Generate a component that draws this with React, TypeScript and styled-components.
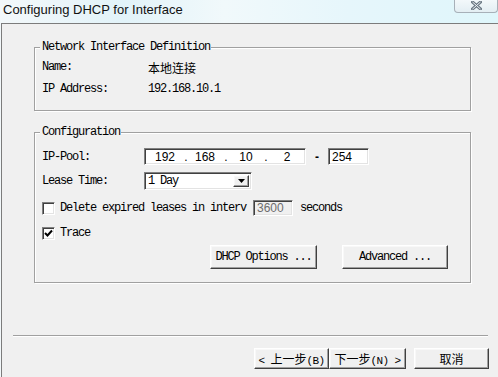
import React from "react";
import styled, { createGlobalStyle, css } from "styled-components";

const GlobalStyle = createGlobalStyle`
  html, body {
    margin: 0;
    padding: 0;
    background: #e9f3f7;
  }
`;

const dosFont = `"Liberation Mono", "Noto Sans CJK SC", monospace`;

const sunken = css`
  box-sizing: border-box;
  border: 1px solid;
  border-color: #808080 #ffffff #ffffff #808080;
  box-shadow: inset 1px 1px 0 #404040, inset -1px -1px 0 #e3e3e3;
`;

const raised = css`
  box-sizing: border-box;
  border: 1px solid;
  border-color: #ffffff #404040 #404040 #ffffff;
  box-shadow: inset -1px -1px 0 #a0a0a0, inset 1px 1px 0 #f8f8f8;
  background: #f0f0f0;
`;

const Window = styled.div`
  width: 498px;
  height: 377px;
  display: flex;
  flex-direction: column;
  overflow: hidden;
  background: linear-gradient(90deg, #f3f8fa 0%, #e2f3f9 25%, #f1f9fb 45%, #e6f6fb 70%, #dff6fb 100%);
`;

const TitleBar = styled.div`
  height: 23px;
  flex: none;
  display: flex;
  align-items: flex-start;
  justify-content: space-between;
`;

const Title = styled.span`
  font-family: "Liberation Sans", "Noto Sans", sans-serif;
  font-size: 13px;
  line-height: 17px;
  padding: 1px 0 0 3px;
  color: #111;
`;

const CloseButton = styled.div`
  width: 44px;
  height: 14px;
  margin-top: -1px;
  box-sizing: border-box;
  border: 1px solid #a7b0b8;
  border-top: none;
  border-radius: 0 0 4px 4px;
  background: linear-gradient(#f4f9fb, #e3eef3);
  display: flex;
  align-items: center;
  justify-content: center;
`;

const Client = styled.div`
  flex: 1;
  margin-left: 1px;
  border-top: 1px solid #7c7c7c;
  border-left: 1px solid #7c7c7c;
  background: #f0f0f0;
  padding: 23px 9px 0 11px;
  display: flex;
  flex-direction: column;
  font-family: ${dosFont};
  font-size: 12px;
  letter-spacing: -1.2px;
  color: #000;
`;

const Group = styled.div<{ $pad: string; $top?: number }>`
  position: relative;
  margin: ${p => p.$top ?? 0}px 18px 0 21px;
  border: 1px solid #a0a0a0;
  box-shadow: inset 1px 1px 0 #fff, 1px 1px 0 #fff;
  padding: ${p => p.$pad};
  display: flex;
  flex-direction: column;
`;

const Legend = styled.span`
  position: absolute;
  top: -8px;
  left: 5px;
  padding: 0 1px 0 2px;
  background: #f0f0f0;
  line-height: 15px;
`;

const InfoRow = styled.div`
  height: 22px;
  display: flex;
  align-items: center;
`;

const Label = styled.span<{ $w: number }>`
  width: ${p => p.$w}px;
  flex: none;
`;

const Cjk = styled.span`
  font-family: "Noto Sans CJK SC", sans-serif;
  font-size: 12px;
  letter-spacing: 0;
`;

const FormRow = styled.div<{ $top: number; $h: number }>`
  margin-top: ${p => p.$top}px;
  height: ${p => p.$h}px;
  display: flex;
  align-items: center;
`;

const Field = styled.div<{ $w: number; $disabled?: boolean }>`
  ${sunken};
  width: ${p => p.$w}px;
  height: 100%;
  background: ${p => (p.$disabled ? "#f0f0f0" : "#fff")};
  color: ${p => (p.$disabled ? "#6d6d6d" : "#000")};
  display: flex;
  align-items: center;
  padding-left: 3px;
  font-family: "Liberation Sans", sans-serif;
  font-size: 12px;
  letter-spacing: 0;
`;

const Octet = styled.span<{ $w: number }>`
  width: ${p => p.$w}px;
  text-align: center;
`;

const Dash = styled.span`
  width: 22px;
  text-align: center;
  font-family: "Liberation Sans", sans-serif;
  font-weight: bold;
  letter-spacing: 0;
`;

const Select = styled.div`
  ${sunken};
  width: 108px;
  height: 100%;
  background: #fff;
  display: flex;
  align-items: stretch;
  padding: 2px;
`;

const SelectText = styled.span`
  flex: 1;
  display: flex;
  align-items: center;
  padding-left: 1px;
`;

const ArrowButton = styled.span`
  ${raised};
  width: 16px;
  display: flex;
  align-items: center;
  justify-content: center;
`;

const Check = styled.span`
  ${sunken};
  width: 13px;
  height: 13px;
  flex: none;
  background: #fff;
  display: flex;
  align-items: center;
  justify-content: center;
  margin-right: 5px;
`;

const LongLabel = styled.span`
  width: 188px;
  flex: none;
  white-space: nowrap;
  margin-right: 5px;
`;

const Suffix = styled.span`
  margin-left: 7px;
`;

const ButtonRow = styled.div<{ $top: number; $left?: number }>`
  margin-top: ${p => p.$top}px;
  margin-left: ${p => p.$left ?? 0}px;
  display: flex;
`;

const PushButton = styled.div<{ $w: number; $h: number; $gap?: number }>`
  ${raised};
  width: ${p => p.$w}px;
  height: ${p => p.$h}px;
  margin-left: ${p => p.$gap ?? 0}px;
  display: flex;
  align-items: center;
  justify-content: center;
`;

const Separator = styled.div`
  margin-top: 52px;
  width: 475px;
  height: 1px;
  background: #a0a0a0;
  border-bottom: 1px solid #fff;
`;

const Footer = styled.div`
  margin-top: 11px;
  display: flex;
  justify-content: flex-end;
`;

const WizText = styled.span`
  font-family: "Noto Sans CJK SC", sans-serif;
  font-size: 12px;
  letter-spacing: 0;
  white-space: pre;
`;

const Mono = styled.span`
  font-family: ${dosFont};
  font-size: 11px;
  letter-spacing: -0.6px;
`;

export default function App() {
  return (
    <>
      <GlobalStyle />
      <Window>
        <TitleBar>
          <Title>Configuring DHCP for Interface</Title>
          <CloseButton>
            <svg width="11" height="9" viewBox="0 0 11 9">
              <path d="M1.5 1 L9.5 8 M9.5 1 L1.5 8" stroke="#6b7884" strokeWidth="3" strokeLinecap="square" />
              <path d="M1.5 1 L9.5 8 M9.5 1 L1.5 8" stroke="#eef3f6" strokeWidth="1" />
            </svg>
          </CloseButton>
        </TitleBar>
        <Client>
          <Group $pad="8px 7px 10px">
            <Legend>Network Interface Definition</Legend>
            <InfoRow>
              <Label $w={106}>Name:</Label>
              <Cjk>本地连接</Cjk>
            </InfoRow>
            <InfoRow>
              <Label $w={106}>IP Address:</Label>
              <span>192.168.10.1</span>
            </InfoRow>
          </Group>

          <Group $pad="15px 7px 13px" $top={21}>
            <Legend>Configuration</Legend>
            <FormRow $top={0} $h={17}>
              <Label $w={102}>IP-Pool:</Label>
              <Field $w={162}>
                <Octet $w={34}>192</Octet>
                <Octet $w={8}>.</Octet>
                <Octet $w={30}>168</Octet>
                <Octet $w={12}>.</Octet>
                <Octet $w={28}>10</Octet>
                <Octet $w={12}>.</Octet>
                <Octet $w={30}>2</Octet>
              </Field>
              <Dash>-</Dash>
              <Field $w={41}>254</Field>
            </FormRow>
            <FormRow $top={7} $h={18}>
              <Label $w={102}>Lease Time:</Label>
              <Select>
                <SelectText>1 Day</SelectText>
                <ArrowButton>
                  <svg width="7" height="4" viewBox="0 0 7 4">
                    <path d="M0 0 H7 L3.5 4 Z" fill="#000" />
                  </svg>
                </ArrowButton>
              </Select>
            </FormRow>
            <FormRow $top={10} $h={16}>
              <Check />
              <LongLabel>Delete expired leases in interv</LongLabel>
              <Field $w={40} $disabled>3600</Field>
              <Suffix>seconds</Suffix>
            </FormRow>
            <FormRow $top={9} $h={16}>
              <Check>
                <svg width="9" height="9" viewBox="0 0 9 9">
                  <path d="M1 4 L3.5 6.5 L8 1.5" stroke="#000" strokeWidth="2" fill="none" />
                </svg>
              </Check>
              <span>Trace</span>
            </FormRow>
            <ButtonRow $top={4} $left={168}>
              <PushButton $w={107} $h={24}>DHCP Options ...</PushButton>
              <PushButton $w={106} $h={24} $gap={25}>Advanced ...</PushButton>
            </ButtonRow>
          </Group>

          <Separator />

          <Footer>
            <PushButton $w={75} $h={21}>
              <WizText>
                <Mono>&lt; </Mono>上一步<Mono>(B)</Mono>
              </WizText>
            </PushButton>
            <PushButton $w={77} $h={21}>
              <WizText>
                下一步<Mono>(N) &gt;</Mono>
              </WizText>
            </PushButton>
            <PushButton $w={75} $h={21} $gap={8}>
              <WizText>取消</WizText>
            </PushButton>
          </Footer>
        </Client>
      </Window>
    </>
  );
}
